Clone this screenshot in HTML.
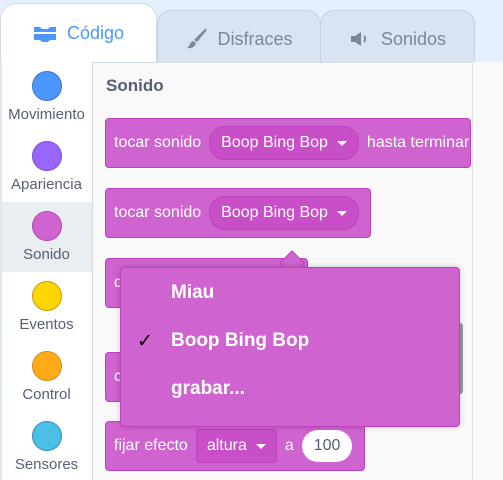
<!DOCTYPE html>
<html><head><style>
*{margin:0;padding:0;box-sizing:border-box}
body{width:503px;height:480px;overflow:hidden;background:#e5f0ff;font-family:"Liberation Sans",sans-serif;position:relative}
.abs{position:absolute}
.tab{position:absolute;top:10px;height:53px;background:#d9e3f2;border:1px solid #c5d0e0;border-bottom:none;border-radius:14px 14px 0 0;color:#7a8797;font-size:18px;display:flex;align-items:center;justify-content:center;gap:10px;padding-top:4px}
.cat{position:absolute;left:0;width:93px;text-align:center;font-size:15px;color:#575e75}
.cat .c{width:30px;height:30px;border-radius:50%;margin:0 auto 5px}
.blk{position:absolute;background:#cf63cf;border:1px solid #bd42bd;border-radius:4px;color:#fff;font-size:16px;display:flex;align-items:center;padding-left:8px;gap:8px;white-space:nowrap;overflow:hidden}
.dd{background:#c94fc9;border:1px solid #bd42bd;border-radius:16px;height:34px;display:flex;align-items:center;padding:0 11px;gap:9px}
.tri{width:0;height:0;border-left:5px solid transparent;border-right:5px solid transparent;border-top:5px solid #fff}
</style></head><body>
<div class="tab" style="left:157px;width:164px"><svg width="22" height="24" viewBox="0 0 22 24"><path d="M20 2 C21 1 22 2 21 4 L12 15 L9 13 Z M8 14 L11 16 C10 20 6 22 2 21 C5 19 5 15 8 14Z" fill="#7a8797"/></svg>Disfraces</div>
<div class="tab" style="left:320px;width:155px"><svg width="22" height="22" viewBox="0 0 22 22"><path d="M2 8h4l6-4v14l-6-4H2z" fill="#7a8797"/><path d="M15 8c1.5 1.5 1.5 4.5 0 6" stroke="#7a8797" stroke-width="2" fill="none"/></svg>Sonidos</div>
<div class="abs" style="left:0;top:3px;width:157px;height:62px;background:#fff;border:1px solid #d0dae8;border-bottom:none;border-radius:16px 16px 0 0;color:#4c97ff;font-size:18px;display:flex;align-items:center;justify-content:center;gap:10px;padding-bottom:2px"><svg width="24" height="18" viewBox="0 0 24 18"><path d="M1 2h6l2 2h6l2-2h6v5H1z M1 9h22v6h-6l-2 2H9l-2-2H1z" fill="#4c97ff"/></svg>Código</div>
<div class="abs" style="left:0;top:62px;width:503px;height:418px;background:#f9f9f9;border-top:1px solid #d0dae8"></div>
<div class="abs" style="left:472px;top:62px;width:31px;height:418px;background:#f9f9f9;border-left:1px solid #e0e0e0"></div>
<div class="abs" style="left:0;top:62px;width:93px;height:418px;background:#fff;border-right:1px solid #d9d9d9;border-left:2px solid #e0e8f2"></div>
<div class="abs" style="left:2px;top:202px;width:90px;height:70px;background:#e9eef2"></div>
<div class="cat" style="top:71px"><div class="c" style="background:#4c97ff;border:1px solid #3373cc"></div>Movimiento</div>
<div class="cat" style="top:141px"><div class="c" style="background:#9966ff;border:1px solid #774dcb"></div>Apariencia</div>
<div class="cat" style="top:211px"><div class="c" style="background:#cf63cf;border:1px solid #bd42bd"></div>Sonido</div>
<div class="cat" style="top:281px"><div class="c" style="background:#ffd500;border:1px solid #cc9900"></div>Eventos</div>
<div class="cat" style="top:351px"><div class="c" style="background:#ffab19;border:1px solid #cf8b17"></div>Control</div>
<div class="cat" style="top:421px"><div class="c" style="background:#4cbfe6;border:1px solid #2e8eb8"></div>Sensores</div>
<div class="abs" style="left:106px;top:76px;font-size:17px;font-weight:bold;color:#575e75">Sonido</div>
<div class="blk" style="left:105px;top:118px;width:366px;height:50px">tocar sonido <div class="dd">Boop Bing Bop <div class="tri"></div></div> hasta terminar</div>
<div class="blk" style="left:105px;top:188px;width:266px;height:50px">tocar sonido <div class="dd">Boop Bing Bop <div class="tri"></div></div></div>
<div class="blk" style="left:105px;top:258px;width:203px;height:50px">d</div>
<div class="blk" style="left:105px;top:352px;width:40px;height:50px">c</div>
<div class="abs" style="left:455px;top:323px;width:8px;height:71px;background:#999;border-radius:3px"></div>
<div class="blk" style="left:105px;top:421px;width:260px;height:50px">fijar efecto <div class="dd" style="border-radius:4px;height:34px;padding:0 10px">altura <div class="tri"></div></div> a <div style="background:#fff;color:#575e75;border-radius:16px;height:32px;padding:0 12px;display:flex;align-items:center">100</div></div>
<div class="abs" style="left:283px;top:254px;width:18px;height:18px;background:#cf63cf;transform:rotate(45deg);border:1px solid #bd42bd"></div>
<div class="abs" style="left:120px;top:267px;width:340px;height:160px;background:#cf63cf;border:1px solid #bd42bd;border-radius:4px;box-shadow:0 0 6px rgba(0,0,0,.2);color:#fff;font-weight:bold;font-size:19px">
<div class="abs" style="left:50px;top:14px">Miau</div>
<div class="abs" style="left:16px;top:62px;color:#000;font-weight:normal">✓</div>
<div class="abs" style="left:50px;top:62px">Boop Bing Bop</div>
<div class="abs" style="left:50px;top:110px">grabar...</div>
</div>
</body></html>
